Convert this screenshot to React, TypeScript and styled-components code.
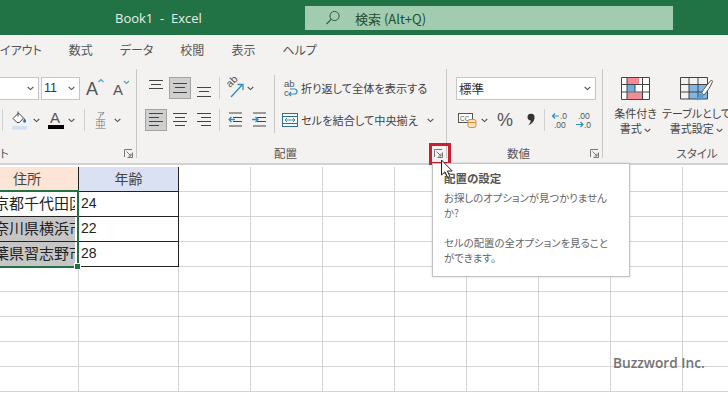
import React from "react";
import styled, { createGlobalStyle } from "styled-components";

const Global = createGlobalStyle`
  html, body { margin: 0; padding: 0; background: #fff; }
  body { font-family: "Noto Sans CJK JP", "Noto Sans", sans-serif; font-feature-settings: "palt"; }
`;

const Page = styled.div`
  position: relative; width: 728px; height: 400px; overflow: hidden;
  display: flex; flex-direction: column; background: #fff; color: #444;
`;
const TitleBar = styled.header`
  height: 35px; flex: none; background: #217346; display: flex; align-items: flex-start;
  padding: 6px 0 0 115px; box-sizing: border-box;
`;
const BookTitle = styled.div`
  width: 190px; height: 24px; line-height: 24px; color: #e6f1ea; white-space: pre;
  font: 400 13px/24px "Open Sans", sans-serif;
`;
const Search = styled.div`
  width: 368px; height: 24px; background: #a1ccb0; display: flex; align-items: center;
  padding-left: 20px; box-sizing: border-box; gap: 14px; color: #1f4e33; font-size: 13px;
  font-feature-settings: "palt";
  svg { flex: none; }
`;
const TabBar = styled.nav`
  height: 32px; flex: none; background: #f3f2f1; display: flex; align-items: center; gap: 27px;
  font-size: 12px; color: #555; padding-bottom: 4px; box-sizing: border-box; white-space: nowrap;
`;
const Ribbon = styled.section`
  height: 98px; flex: none; background: #f3f2f1; display: flex; overflow: hidden;
  padding: 2px 0 5px; box-sizing: border-box; border-bottom: 2px solid #d2d2d2;
`;
const Group = styled.div<{ $w: number; $last?: boolean }>`
  width: ${(p) => p.$w}px; flex: none; box-sizing: border-box; display: flex; flex-direction: column;
  padding-top: 8px; border-right: ${(p) => (p.$last ? "none" : "1px solid #c8c8c8")};
`;
const Body = styled.div`
  display: flex; height: 54px; flex: none;
`;
const Block = styled.div<{ $w?: number; $pl?: number }>`
  width: ${(p) => (p.$w ? `${p.$w}px` : "auto")}; padding-left: ${(p) => p.$pl ?? 0}px;
  box-sizing: border-box; display: flex; flex-direction: column; gap: 10px; flex: none;
`;
const Row = styled.div`
  height: 22px; display: flex; align-items: center; white-space: nowrap;
`;
const TallSep = styled.div`
  width: 1px; height: 58px; margin-top: -2px; background: #c8c8c8; flex: none;
`;
const VSep = styled.span<{ $ml?: number }>`
  width: 1px; height: 22px; margin-left: ${(p) => p.$ml ?? 0}px; background: #d0d0d0; flex: none;
`;
const Slot = styled.span<{ $w?: number; $ml?: number; $active?: boolean }>`
  width: ${(p) => p.$w ?? 22}px; height: 22px; margin-left: ${(p) => p.$ml ?? 0}px; flex: none;
  box-sizing: border-box; display: inline-flex; align-items: center; justify-content: center;
  background: ${(p) => (p.$active ? "#cfcfcf" : "transparent")};
  box-shadow: ${(p) => (p.$active ? "inset 0 0 0 1px #a3a3a3" : "none")};
`;
const Combo = styled.div<{ $w: number; $ml?: number }>`
  width: ${(p) => p.$w}px; height: 23px; margin-left: ${(p) => p.$ml ?? 0}px; flex: none;
  background: #fff; border: 1px solid #c6c6c6; box-sizing: border-box;
  display: flex; align-items: center; justify-content: space-between; padding: 0 4px 0 2px;
  font: 400 12.5px "Liberation Sans", "Noto Sans CJK JP", sans-serif; color: #333;
`;
const RibbonText = styled.span<{ $ml?: number }>`
  font-size: 11.2px; color: #444; margin-left: ${(p) => p.$ml ?? 0}px;
`;
const Footer = styled.div`
  margin-top: auto; margin-bottom: -2px; height: 14px; display: flex; align-items: center;
`;
const GroupLabel = styled.span<{ $left?: boolean }>`
  flex: 1; text-align: ${(p) => (p.$left ? "left" : "center")}; font-size: 11.5px; line-height: 14px; color: #555;
  white-space: nowrap;
`;
const Launcher = styled.svg`
  width: 9px; height: 9px; margin-right: 3px; flex: none;
`;
const StyleRow = styled.div`
  display: flex; padding-left: 2px;
`;
const BigButton = styled.div`
  width: 61px; flex: none; display: flex; flex-direction: column; align-items: center;
  & > svg { flex: none; }
`;
const BigText = styled.div<{ $mt: number }>`
  flex: none; margin-top: ${(p) => p.$mt}px; font-size: 11px; line-height: 15px; color: #444; text-align: center; white-space: nowrap;
`;
const Sheet = styled.div`
  position: relative; flex: 1; overflow: hidden; display: grid;
  grid-template-columns: 79px 100px repeat(8, 72px); grid-auto-rows: 25px; margin-top: 2px;
`;
const Cell = styled.div<{ $kind?: "plain" | "black" }>`
  box-sizing: border-box; overflow: hidden; white-space: nowrap; height: 25px;
  border-right: 1px solid ${(p) => (p.$kind === "black" ? "#222" : "#d4d4d4")};
  border-bottom: 1px solid ${(p) => (p.$kind === "black" ? "#222" : "#d4d4d4")};
  background: #fff;
  font-feature-settings: normal;
`;
const HeadCell = styled.div<{ $peach?: boolean }>`
  box-sizing: border-box; height: 27px; margin-top: -2px; display: flex; align-items: center; justify-content: center;
  border-right: 1px solid #222; border-bottom: 1px solid #222; font-size: 14px; color: #444;
  background: ${(p) => (p.$peach ? "#fce4d6" : "#d9e1f2")};
  padding-right: ${(p) => (p.$peach ? 24 : 0)}px; font-feature-settings: normal;
`;
const Address = styled.div<{ $grey?: boolean }>`
  width: 75px; height: 24px; overflow: hidden; background: ${(p) => (p.$grey ? "#c6c6c6" : "#fff")};
  font-size: 15px; line-height: 22px; color: #222; text-indent: -21px; font-feature-settings: normal;
`;
const Age = styled.div`
  font: 400 14px/22px "Liberation Sans", sans-serif; color: #222; padding-left: 2px;
`;
const Selection = styled.div`
  position: absolute; left: -4px; top: 23px; width: 83px; height: 78px; box-sizing: border-box;
  border: 2px solid #217346; pointer-events: none;
  &::after {
    content: ""; position: absolute; right: -4px; bottom: -4px; width: 5px; height: 5px;
    background: #217346; border: 1px solid #fff;
  }
`;
const RedBox = styled.div`
  position: absolute; left: 429px; top: 143px; width: 22px; height: 22px; box-sizing: border-box;
  border: 3px solid #c8202c;
`;
const Tip = styled.aside`
  position: absolute; left: 432px; top: 163px; width: 198px; height: 114px; box-sizing: border-box;
  background: #fff; border: 1px solid #c2c2c2; box-shadow: 0 0 2px rgba(0,0,0,.18);
  padding: 6px 11px; color: #666; font-size: 10.4px; line-height: 15.3px; white-space: nowrap;
`;
const TipTitle = styled.div`
  font-size: 11.5px; font-weight: 700; color: #555; line-height: 16px; margin-bottom: 4px;
`;
const TipPara = styled.p`
  margin: 0 0 14.5px;
`;
const Cursor = styled.svg`
  position: absolute; left: 440px; top: 159px; width: 14px; height: 20px;
`;
const Mark = styled.div`
  position: absolute; left: 613px; top: 354px; font: 600 13.7px/18px "Open Sans", sans-serif; color: #737373;
`;

const L = "#444";
const Chevron = ({ ml = 0 }: { ml?: number }) => (
  <svg width="7" height="5" viewBox="0 0 7 5" style={{ marginLeft: ml, flex: "none" }}>
    <path d="M.7 1l2.800 2.600L6.300 1" fill="none" stroke="#555" strokeWidth="1.100" />
  </svg>
);
const Lines = ({ rows }: { rows: [number, number, number][] }) => (
  <svg width="22" height="22" viewBox="0 0 22 22">
    {rows.map(([a, b, y], i) => (
      <line key={i} x1={a} x2={b} y1={y} y2={y} stroke={L} strokeWidth="1" />
    ))}
  </svg>
);
const Launch = () => (
  <Launcher viewBox="0 0 9 9">
    <path d="M.5 8V.5H8M8.500 3.500v5H3.500M2.500 2.500L7 7M7 4.500V7H4.500" fill="none" stroke="#777" strokeWidth="1" />
  </Launcher>
);
const Indent = ({ right }: { right?: boolean }) => (
  <svg width="22" height="22" viewBox="0 0 22 22">
    <path d="M9 4h13M13 8.500h9M13 12.500h9M9 17h13" transform="translate(-4 0)" stroke={L} strokeWidth="1" fill="none" />
    <path
      d={right ? "M4 10.500h6M7.500 8l2.500 2.500L7.500 13" : "M5 10.500h6M7.500 8L5 10.500 7.500 13"}
      stroke="#2f8fc4" strokeWidth="1.300" fill="none"
    />
  </svg>
);
const Grow = ({ up }: { up?: boolean }) => (
  <svg width="22" height="22" viewBox="0 0 22 22">
    <text x={up ? 0 : 2} y="18" fontFamily="Liberation Sans" fontSize={up ? 18 : 15} fill="#555">A</text>
    <path d={up ? "M12.500 5l2.500-2.500L17.500 5" : "M13 3l2.500 2.500L18 3"} transform={up ? "" : "translate(0 1)"} fill="none" stroke="#4aa3c9" strokeWidth="1.200" />
  </svg>
);

export default function App() {
  const blanks = (n: number) => Array.from({ length: n }, (_, i) => <Cell key={i} />);
  return (
    <Page>
      <Global />
      <TitleBar>
        <BookTitle>{"Book1  -  Excel"}</BookTitle>
        <Search>
          <svg width="16" height="16" viewBox="0 0 16 16">
            <circle cx="9.500" cy="6" r="4.600" fill="none" stroke="#2b5c3f" strokeWidth="1" />
            <path d="M6.200 9.300L1.500 14" stroke="#2b5c3f" strokeWidth="1.100" />
          </svg>
          <span>検索 (Alt+Q)</span>
        </Search>
      </TitleBar>
      <TabBar>
        <span>イアウト</span><span>数式</span><span>データ</span><span>校閲</span><span>表示</span><span>ヘルプ</span>
      </TabBar>
      <Ribbon>
        <Group $w={137}>
          <Body>
            <Block>
              <Row>
                <Combo $w={41} $ml={-2}><span /><Chevron /></Combo>
                <Combo $w={39} $ml={2}><span>11</span><Chevron /></Combo>
                <Slot $ml={6}><Grow up /></Slot>
                <Slot $ml={3}><Grow /></Slot>
              </Row>
              <Row>
                <VSep $ml={2} />
                <Slot $w={18} $ml={8}>
                  <svg width="18" height="22" viewBox="0 0 18 22">
                    <path d="M2 9.500L7.500 4l5 5-4 4.500H6z" fill="#fff" stroke={L} strokeWidth="1" />
                    <path d="M7 2.500v5" stroke={L} strokeWidth="1" />
                    <path d="M13.500 9c1.200 1.800 1.500 2.500 1.500 3.300a1.300 1.300 0 01-2.800 0c0-.8.300-1.500 1.300-3.300z" fill="#2b6fa8" />
                    <rect x="1" y="17" width="15" height="3.500" fill="#cfe2f3" />
                  </svg>
                </Slot>
                <Chevron ml={4} />
                <Slot $w={18} $ml={7}>
                  <svg width="18" height="22" viewBox="0 0 18 22">
                    <text x="3" y="14" fontFamily="Liberation Sans" fontSize="15" fill="#555">A</text>
                    <rect x="1" y="16" width="16" height="4" fill="#000" />
                  </svg>
                </Slot>
                <Chevron ml={3} />
                <VSep $ml={9} />
                <Slot $w={14} $ml={9}>
                  <svg width="14" height="22" viewBox="0 0 14 22">
                    <text x="3" y="9" fontFamily="Noto Sans CJK JP" fontSize="8" fill="#777">ア</text>
                    <text x="1" y="19" fontFamily="Noto Sans CJK JP" fontSize="11" fill="#999">亜</text>
                  </svg>
                </Slot>
                <Chevron ml={6} />
              </Row>
            </Block>
          </Body>
          <Footer><GroupLabel $left>ト</GroupLabel><Launch /></Footer>
        </Group>

        <Group $w={310}>
          <Body>
            <Block $w={137} $pl={8}>
              <Row>
                <Slot><Lines rows={[[4, 18, 3.5], [6, 16, 7.5], [4, 18, 11.5]]} /></Slot>
                <Slot $ml={2} $active><Lines rows={[[4, 18, 6.5], [6, 16, 10.5], [4, 18, 15.5]]} /></Slot>
                <Slot $ml={2}><Lines rows={[[4, 18, 10.5], [6, 16, 14.5], [4, 18, 19.5]]} /></Slot>
                <VSep $ml={4} />
                <Slot $ml={4}>
                  <svg width="22" height="22" viewBox="0 0 22 22">
                    <text x="0" y="0" fontFamily="Liberation Sans" fontSize="10.500" fill="#555" transform="translate(6 11) rotate(-45)">ab</text>
                    <path d="M7 20L18 8M13.500 7.500H19V13" stroke="#2f8fc4" strokeWidth="1.300" fill="none" />
                  </svg>
                </Slot>
                <Chevron ml={1} />
              </Row>
              <Row>
                <Slot $active><Lines rows={[[4, 18, 4.5], [4, 14, 8.5], [4, 18, 12.5], [4, 14, 16.5]]} /></Slot>
                <Slot $ml={2}><Lines rows={[[4, 18, 4.5], [6, 16, 8.5], [4, 18, 12.5], [6, 16, 16.5]]} /></Slot>
                <Slot $ml={2}><Lines rows={[[4, 18, 4.5], [8, 18, 8.5], [4, 18, 12.5], [8, 18, 16.5]]} /></Slot>
                <VSep $ml={4} />
                <Slot $ml={4}><Indent /></Slot>
                <Slot $ml={2}><Indent right /></Slot>
              </Row>
            </Block>
            <TallSep />
            <Block $pl={7}>
              <Row>
                <Slot $w={16}>
                  <svg width="16" height="22" viewBox="0 0 16 22">
                    <text x="2" y="10" fontFamily="Liberation Sans" fontSize="9.500" fill="#555">ab</text>
                    <text x="2" y="19" fontFamily="Liberation Sans" fontSize="9.500" fill="#555">c</text>
                    <path d="M7 17h5.500a2.500 2.500 0 000-5H8M9 15l-2 2 2 2" fill="none" stroke="#2f8fc4" strokeWidth="1.200" />
                  </svg>
                </Slot>
                <RibbonText $ml={3}>折り返して全体を表示する</RibbonText>
              </Row>
              <Row>
                <Slot $w={16}>
                  <svg width="16" height="16" viewBox="0 0 16 16">
                    <rect x=".5" y="1.500" width="15" height="13" fill="#fff" stroke="#2f6f8f" />
                    <path d="M1 4.500h14M1 11.500h14" stroke="#2f6f8f" />
                    <path d="M3 8h10M5 6L3 8l2 2M11 6l2 2-2 2" fill="none" stroke="#2f8fc4" />
                  </svg>
                </Slot>
                <RibbonText $ml={3}>セルを結合して中央揃え</RibbonText>
                <Chevron ml={9} />
              </Row>
            </Block>
          </Body>
          <Footer><GroupLabel>配置</GroupLabel><Launch /></Footer>
        </Group>

        <Group $w={156}>
          <Body>
            <Block $pl={9}>
              <Row>
                <Combo $w={140}><span>標準</span><Chevron /></Combo>
              </Row>
              <Row>
                <Slot $w={20} $ml={2}>
                  <svg width="20" height="20" viewBox="0 0 20 20">
                    <rect x=".5" y="3.500" width="14" height="9" fill="#fff" stroke="#555" />
                    <text x="2" y="10.500" fontFamily="Liberation Sans" fontSize="6.500" fill="#555">CC</text>
                    <rect x="10" y="9.500" width="8" height="8" rx="2" fill="#fbe4c8" stroke="#e0902a" />
                    <path d="M10 12.500h8" stroke="#e0902a" />
                  </svg>
                </Slot>
                <Chevron ml={3} />
                <Slot $w={18} $ml={9}>
                  <svg width="18" height="22" viewBox="0 0 18 22">
                    <text x="0" y="17" fontFamily="Liberation Sans" fontSize="18" fill="#555">%</text>
                  </svg>
                </Slot>
                <Slot $w={10} $ml={11}>
                  <svg width="10" height="22" viewBox="0 0 10 22">
                    <path d="M1.500 8a3.500 3.500 0 117 .5c0 3.500-2.500 6.500-6.500 8 1.700-1.700 2.700-3.200 2.800-5C2.800 11.500 1.500 10 1.500 8z" fill="#333" />
                  </svg>
                </Slot>
                <VSep $ml={8} />
                <Slot $w={18} $ml={6}>
                  <svg width="18" height="22" viewBox="0 0 18 22">
                    <path d="M8 7H1.500M4 4.500L1.500 7 4 9.500" fill="none" stroke="#2f8fc4" strokeWidth="1.200" />
                    <text x="9" y="10" fontFamily="Liberation Sans" fontSize="8.500" fill="#555">.0</text>
                    <text x="3" y="19" fontFamily="Liberation Sans" fontSize="8.500" fill="#555">.00</text>
                  </svg>
                </Slot>
                <Slot $w={18} $ml={6}>
                  <svg width="18" height="22" viewBox="0 0 18 22">
                    <text x="3" y="10" fontFamily="Liberation Sans" fontSize="8.500" fill="#555">.00</text>
                    <path d="M1 15.500h7M5.500 13L8 15.500 5.500 18" fill="none" stroke="#2f8fc4" strokeWidth="1.200" />
                    <text x="9" y="19" fontFamily="Liberation Sans" fontSize="8.500" fill="#555">.0</text>
                  </svg>
                </Slot>
              </Row>
            </Block>
          </Body>
          <Footer><GroupLabel>数値</GroupLabel><Launch /></Footer>
        </Group>

        <Group $w={188} $last>
          <Body>
            <StyleRow>
              <BigButton>
                <svg width="29" height="23" viewBox="0 0 29 23">
                  <rect x=".5" y=".5" width="28" height="22" fill="#fff" />
                  <rect x="6" y="1" width="12" height="6" fill="#f28b95" />
                  <rect x="6" y="8" width="8" height="6.500" fill="#6faee3" />
                  <rect x="6" y="15.500" width="15" height="7" fill="#f28b95" />
                  <path d="M.5.500h28v22H.5zM.5 7.500h28M.5 15h28M6 .5v22M21.500.5v22M14 7.500V15" fill="none" stroke="#444" strokeWidth="1" />
                </svg>
                <BigText $mt={6}>条件付き<br />書式 <Chevron /></BigText>
              </BigButton>
              <BigButton>
                <svg width="33" height="25" viewBox="0 0 33 25">
                  <rect x="9" y="8" width="18" height="14" fill="#7fb6e6" />
                  <path d="M.5.500h27v21.500H.5zM.5 7.500h27M.5 15h27M9 .5V22M18 .5V22" fill="none" stroke="#444" strokeWidth="1" />
                  <path d="M31.500 3c-3 3-8 9-10 13l2.500 2c3-3 7-9 8.500-13.500z" fill="#fff" stroke="#555" strokeWidth="1" />
                  <path d="M21 16c-2 1-2 3-3 4.500-.7 1-2 1.500-3 2 3.500 1.500 7.500.5 9-4.500z" fill="#5b9bd5" />
                </svg>
                <BigText $mt={4}>テーブルとして<br />書式設定 <Chevron /></BigText>
              </BigButton>
            </StyleRow>
          </Body>
          <Footer><GroupLabel>スタイル</GroupLabel></Footer>
        </Group>
      </Ribbon>
      <Sheet>
        <HeadCell $peach>住所</HeadCell>
        <HeadCell>年齢</HeadCell>
        {blanks(8)}
        <Cell $kind="black"><Address>東京都千代田区</Address></Cell>
        <Cell $kind="black"><Age>24</Age></Cell>
        {blanks(8)}
        <Cell $kind="black"><Address $grey>神奈川県横浜市</Address></Cell>
        <Cell $kind="black"><Age>22</Age></Cell>
        {blanks(8)}
        <Cell $kind="black"><Address $grey>千葉県習志野市</Address></Cell>
        <Cell $kind="black"><Age>28</Age></Cell>
        {blanks(8)}
        {blanks(50)}
        <Selection />
      </Sheet>
      <RedBox />
      <Tip>
        <TipTitle>配置の設定</TipTitle>
        <TipPara>お探しのオプションが見つかりません<br />か?</TipPara>
        <TipPara>セルの配置の全オプションを見ること<br />ができます。</TipPara>
      </Tip>
      <Cursor viewBox="0 0 14 20">
        <path d="M1.500 1v15l3.500-3.200 2.600 5.700 2.300-1-2.500-5.500h4.800z" fill="#fff" stroke="#222" strokeWidth="1" />
      </Cursor>
      <Mark>Buzzword Inc.</Mark>
    </Page>
  );
}
